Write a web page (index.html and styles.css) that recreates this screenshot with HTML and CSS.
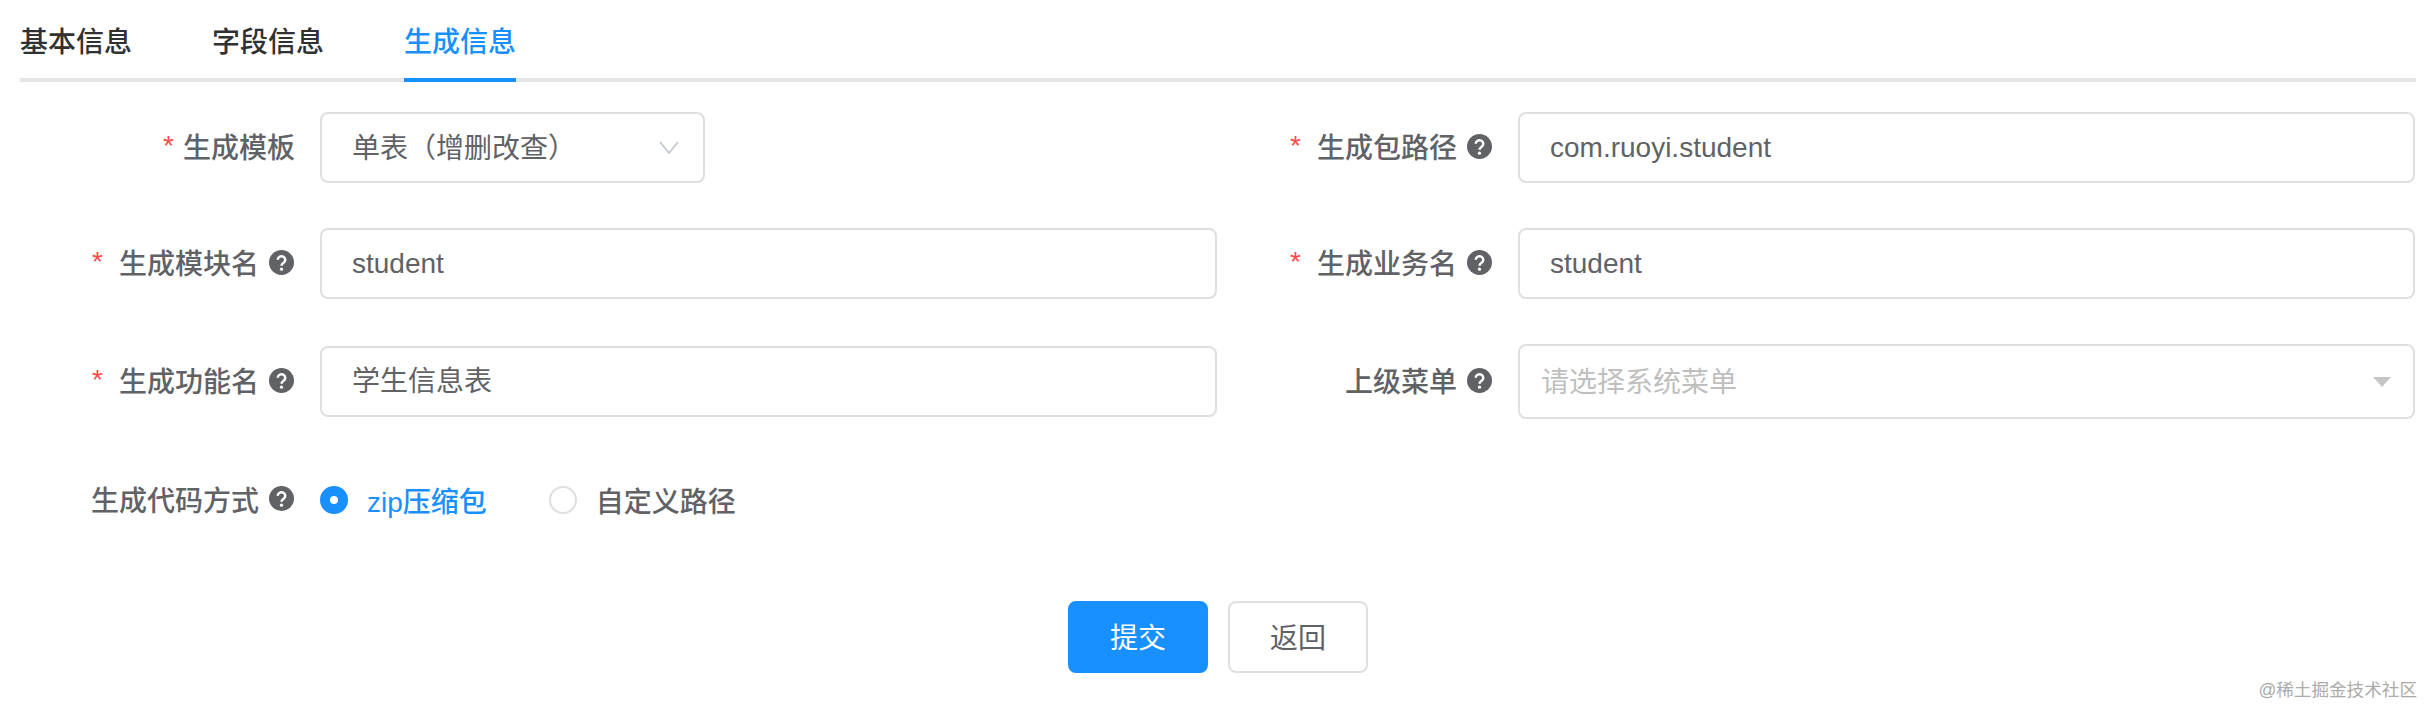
FILE: index.html
```html
<!DOCTYPE html>
<html lang="zh-CN">
<head>
  <meta charset="UTF-8"/>
  <meta name="viewport" content="width=device-width,initial-scale=1.0"/>
  <title>生成信息</title>
  <link rel="stylesheet" href="styles.css">
</head>
<body>

  <nav class="tabs">
    <a class="tab">基本信息</a>
    <a class="tab">字段信息</a>
    <a class="tab active">生成信息</a>
  </nav>

  <form class="gen-form">
    <div class="form-item">
      <label class="item-label plain"><span class="star">*</span>生成模板</label>
      <div class="select-box">
        <span>单表（增删改查）</span>
        <svg class="chevron" viewBox="0 0 20 13"><polyline points="1,1 10,12 19,1"/></svg>
      </div>
    </div>
    <div class="form-item">
      <label class="item-label"><span class="star wide">*</span>生成包路径
        <svg class="help" viewBox="0 0 24 24"><circle cx="12" cy="12" r="12"/><path d="M8.4 9.4a3.6 3.4 0 1 1 5.6 2.8c-1.3.9-2 1.4-2 3"/><circle class="dot" cx="12" cy="18.4" r="1.5"/></svg>
      </label>
      <input class="text-input" type="text" value="com.ruoyi.student">
    </div>

    <div class="form-item">
      <label class="item-label"><span class="star wide">*</span>生成模块名
        <svg class="help" viewBox="0 0 24 24"><circle cx="12" cy="12" r="12"/><path d="M8.4 9.4a3.6 3.4 0 1 1 5.6 2.8c-1.3.9-2 1.4-2 3"/><circle class="dot" cx="12" cy="18.4" r="1.5"/></svg>
      </label>
      <input class="text-input" type="text" value="student">
    </div>
    <div class="form-item">
      <label class="item-label"><span class="star wide">*</span>生成业务名
        <svg class="help" viewBox="0 0 24 24"><circle cx="12" cy="12" r="12"/><path d="M8.4 9.4a3.6 3.4 0 1 1 5.6 2.8c-1.3.9-2 1.4-2 3"/><circle class="dot" cx="12" cy="18.4" r="1.5"/></svg>
      </label>
      <input class="text-input" type="text" value="student">
    </div>

    <div class="form-item">
      <label class="item-label"><span class="star wide">*</span>生成功能名
        <svg class="help" viewBox="0 0 24 24"><circle cx="12" cy="12" r="12"/><path d="M8.4 9.4a3.6 3.4 0 1 1 5.6 2.8c-1.3.9-2 1.4-2 3"/><circle class="dot" cx="12" cy="18.4" r="1.5"/></svg>
      </label>
      <input class="text-input cjk" type="text" value="学生信息表">
    </div>
    <div class="form-item">
      <label class="item-label">上级菜单
        <svg class="help" viewBox="0 0 24 24"><circle cx="12" cy="12" r="12"/><path d="M8.4 9.4a3.6 3.4 0 1 1 5.6 2.8c-1.3.9-2 1.4-2 3"/><circle class="dot" cx="12" cy="18.4" r="1.5"/></svg>
      </label>
      <div class="tree-select">
        <span>请选择系统菜单</span>
        <i class="caret"></i>
      </div>
    </div>

    <div class="form-item radio-row">
      <label class="item-label">生成代码方式
        <svg class="help" viewBox="0 0 24 24"><circle cx="12" cy="12" r="12"/><path d="M8.4 9.4a3.6 3.4 0 1 1 5.6 2.8c-1.3.9-2 1.4-2 3"/><circle class="dot" cx="12" cy="18.4" r="1.5"/></svg>
      </label>
      <div class="radio-group">
        <span class="radio checked"><i class="radio-mark"></i>zip压缩包</span>
        <span class="radio"><i class="radio-mark"></i>自定义路径</span>
      </div>
    </div>
  </form>

  <div class="actions">
    <button class="btn primary" type="button">提交</button>
    <button class="btn" type="button">返回</button>
  </div>

  <div class="watermark">@稀土掘金技术社区</div>

</body>
</html>
```

FILE: styles.css
```css
:root {
  --blue: #1890ff;
  --text: #606266;
  --dark: #303133;
  --border: #dfdfdf;
  --red: #ff4949;
}
* {
  box-sizing: border-box;
  margin: 0;
  padding: 0;
}
body {
  position: relative;
  height: 706px;
  padding: 0 8px 0 20px;
  overflow: hidden;
  background: #ffffff;
  color: var(--text);
  font-family: "Liberation Sans", "Noto Sans CJK SC", sans-serif;
  font-size: 28px;
}

/* tabs */
.tabs {
  display: flex;
  gap: 80px;
  height: 82px;
  border-bottom: 4px solid #e4e6ea;
}
.tab {
  height: 82px;
  padding-top: 8px;
  line-height: 70px;
  color: var(--dark);
  font-weight: 500;
  border-bottom: 4px solid transparent;
}
.tab.active {
  color: var(--blue);
  border-bottom-color: var(--blue);
}

/* form */
.gen-form {
  display: grid;
  grid-template-columns: 1198px 1198px;
  grid-template-rows: 71px 71px 75px 72px;
  row-gap: 45px;
  margin-top: 30px;
}
.form-item {
  display: flex;
  align-items: center;
}
.item-label {
  flex: 0 0 300px;
  display: flex;
  align-items: center;
  justify-content: flex-end;
  gap: 10px;
  padding-right: 26px;
  padding-bottom: 3px;
  font-weight: 500;
}
.item-label.plain {
  padding-right: 25px;
  gap: 9px;
}
.star {
  color: var(--red);
  font-weight: 400;
}
.star.wide {
  margin-right: 6px;
}
.help {
  flex: none;
  width: 25px;
  height: 25px;
}
.help circle {
  fill: var(--text);
}
.help path {
  fill: none;
  stroke: #ffffff;
  stroke-width: 2.4;
}
.help .dot {
  fill: #ffffff;
}
.text-input,
.select-box {
  height: 71px;
  border: 2px solid var(--border);
  border-radius: 8px;
  background: #ffffff;
  color: var(--text);
  font: inherit;
}
.text-input {
  flex: 0 0 897px;
  padding: 0 30px;
  outline: none;
}
.text-input.cjk {
  padding-bottom: 6px;
}
.select-box {
  flex: 0 0 385px;
  display: flex;
  align-items: center;
  justify-content: space-between;
  padding: 0 24px 3px 30px;
}
.chevron {
  width: 20px;
  height: 13px;
  margin-top: 3px;
}
.chevron polyline {
  fill: none;
  stroke: #c0c4cc;
  stroke-width: 1.6;
}
.tree-select {
  flex: 0 0 897px;
  display: flex;
  align-items: center;
  justify-content: space-between;
  height: 75px;
  padding: 0 22px 4px 21px;
  border: 2px solid var(--border);
  border-radius: 8px;
  color: #bfbfbf;
}
.caret {
  width: 0;
  height: 0;
  margin-top: 4px;
  border-left: 9px solid transparent;
  border-right: 9px solid transparent;
  border-top: 10px solid #c6c6c6;
}

/* radios */
.radio-group {
  display: flex;
  gap: 62px;
}
.radio {
  display: flex;
  align-items: center;
  gap: 19px;
  font-weight: 500;
}
.radio-mark {
  width: 28px;
  height: 28px;
  border: 2px solid var(--border);
  border-radius: 50%;
}
.radio.checked {
  color: var(--blue);
}
.radio.checked .radio-mark {
  border: 10px solid var(--blue);
  background: #ffffff;
}

/* buttons */
.actions {
  display: flex;
  justify-content: center;
  gap: 20px;
  margin-top: 65px;
}
.btn {
  width: 140px;
  height: 72px;
  padding-bottom: 2px;
  border: 2px solid var(--border);
  border-radius: 8px;
  background: #ffffff;
  color: var(--text);
  font: inherit;
}
.btn.primary {
  border-color: var(--blue);
  background: var(--blue);
  color: #ffffff;
}

.watermark {
  position: absolute;
  right: 7px;
  top: 677px;
  color: #ababab;
  font-size: 17.6px;
  line-height: 26px;
}
```
